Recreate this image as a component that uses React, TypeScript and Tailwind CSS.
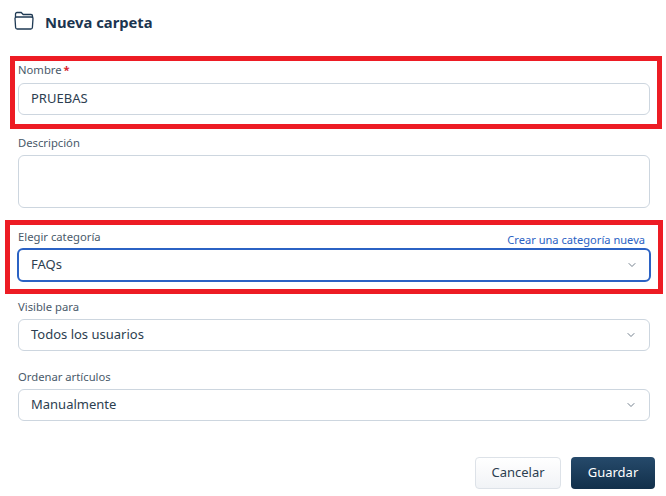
import React from "react";
import { ChevronDown } from "lucide-react";

const font = "font-['Noto_Sans','Open_Sans',sans-serif]";

function Label({ text, required }: { text: string; required?: boolean }) {
  return (
    <label className="block h-[17px] text-[11.25px] leading-[17px] text-[#4a5a6a]">
      {text}
      {required && <span className="ml-[2px] font-bold text-[#d9232e]">*</span>}
    </label>
  );
}

function SelectBox({ value, active }: { value: string; active?: boolean }) {
  return (
    <div
      className={
        active
          ? "mx-[-1px] flex h-[34px] items-center justify-between rounded-md border-2 border-[#2b62c4] pl-3 pr-[11px]"
          : "flex h-[32px] items-center justify-between rounded-md border border-[#cdd6df] pl-3 pr-3"
      }
    >
      <span className="text-[13px] text-[#2c3e50]">{value}</span>
      <ChevronDown className="h-[12px] w-[12px] text-[#5f6e7d]" strokeWidth={1.75} />
    </div>
  );
}

export default function App() {
  return (
    <div className={`relative h-[496px] w-[666px] overflow-hidden bg-white ${font}`}>
      {/* Header */}
      <div className="flex h-[44px] items-center pl-[14px]">
        <svg className="mt-[-2px]" width="20" height="20" viewBox="0 0 20 20" fill="none" stroke="#1f3a54" strokeWidth="1.3">
          <path d="M1.5 6V3A1.5 1.5 0 0 1 3 1.5h4.2l2 2H17A1.5 1.5 0 0 1 18.5 5v2" />
          <path d="M1 7.5A1.5 1.5 0 0 1 2.5 6h15A1.5 1.5 0 0 1 19 7.5l-.6 9A1.6 1.6 0 0 1 16.8 18H3.2a1.6 1.6 0 0 1-1.6-1.5z" />
        </svg>
        <h2 className="ml-[11px] text-[14.75px] font-bold text-[#1b3550]">Nueva carpeta</h2>
      </div>

      {/* Form */}
      <form className="ml-[18px] flex w-[632px] flex-col pt-[17px]">
        <div>
          <Label text="Nombre" required />
          <div className="mt-[5px] flex h-[32px] items-center rounded-md border border-[#cdd6df] pl-3">
            <span className="text-[13px] text-[#2c3e50]">PRUEBAS</span>
          </div>
        </div>

        <div className="mt-[19px]">
          <Label text="Descripción" />
          <div className="mt-[4px] h-[53px] rounded-md border border-[#cdd6df]" />
        </div>

        <div className="mt-[20px]">
          <div className="flex items-end justify-between">
            <Label text="Elegir categoría" />
            <a className="mb-[-2px] mr-[5px] text-[11.1px] leading-[14px] text-[#2b62c4]">Crear una categoría nueva</a>
          </div>
          <div className="mt-[3px]">
            <SelectBox value="FAQs" active />
          </div>
        </div>

        <div className="mt-[16px]">
          <Label text="Visible para" />
          <div className="mt-[4px]">
            <SelectBox value="Todos los usuarios" />
          </div>
        </div>

        <div className="mt-[17px]">
          <Label text="Ordenar artículos" />
          <div className="mt-[4px]">
            <SelectBox value="Manualmente" />
          </div>
        </div>

        <div className="mr-[-5px] mt-[36px] flex justify-end gap-[10px]">
          <button
            type="button"
            className="h-[32px] w-[86px] rounded border border-[#dde2e8] bg-gradient-to-b from-white to-[#f1f3f6] text-[13px] text-[#2c3e50]"
          >
            Cancelar
          </button>
          <button
            type="button"
            className="h-[32px] w-[84px] rounded bg-gradient-to-b from-[#264a6b] to-[#12304b] text-[13px] text-white"
          >
            Guardar
          </button>
        </div>
      </form>

      {/* Red annotation frames */}
      <div className="absolute left-[10px] top-[56px] h-[73px] w-[652px] border-[5px] border-[#ed1c24]" />
      <div className="absolute left-[5px] top-[220px] h-[74px] w-[658px] border-[5px] border-[#ed1c24]" />
    </div>
  );
}
